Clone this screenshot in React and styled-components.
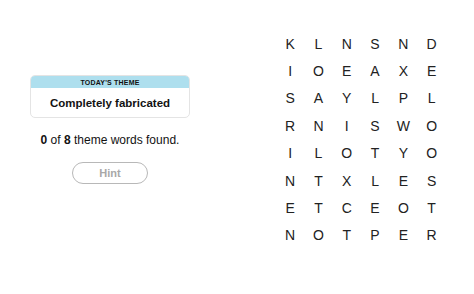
import React from "react";
import styled, { createGlobalStyle } from "styled-components";

const GlobalStyle = createGlobalStyle`
  html, body {
    margin: 0;
    padding: 0;
    background: #fff;
    font-family: "Liberation Sans", Arial, sans-serif;
    color: #121212;
  }
`;

const Page = styled.div`
  display: flex;
  width: 474px;
  height: 294px;
`;

const Side = styled.div`
  width: 220px;
  display: flex;
  flex-direction: column;
  align-items: center;
  padding-top: 75px;
`;

const ThemeCard = styled.div`
  width: 160px;
  border: 1px solid #e4e4e4;
  border-radius: 5px;
  overflow: hidden;
  box-sizing: border-box;
`;

const ThemeHeader = styled.div`
  background: #aedfee;
  height: 12px;
  display: flex;
  align-items: center;
  justify-content: center;
  font-size: 7px;
  font-weight: 700;
  letter-spacing: 0.2px;
  text-transform: uppercase;
`;

const ThemeTitle = styled.div`
  height: 29px;
  display: flex;
  align-items: center;
  justify-content: center;
  font-size: 11.5px;
  font-weight: 700;
`;

const Progress = styled.p`
  margin: 14px 0 0;
  font-size: 12px;
  line-height: 16px;

  b {
    font-weight: 700;
  }
`;

const HintButton = styled.button`
  margin-top: 14px;
  width: 76px;
  height: 22px;
  border: 1.5px solid #b8b8b8;
  border-radius: 12px;
  background: #fff;
  color: #a8a8a8;
  font-family: inherit;
  font-size: 11px;
  font-weight: 700;
  padding: 0;
`;

const Board = styled.div`
  margin: 30px 0 0 56px;
  display: grid;
  grid-template-columns: repeat(6, 28.3px);
  grid-auto-rows: 27.4px;
`;

const Letter = styled.div`
  display: flex;
  align-items: center;
  justify-content: center;
  font-size: 14px;
  color: #222;
  text-transform: uppercase;
`;

const rows = [
  "KLNSND",
  "IOEAXE",
  "SAYLPL",
  "RNISWO",
  "ILOTYO",
  "NTXLES",
  "ETCEOT",
  "NOTPER",
];

export default function App() {
  return (
    <Page>
      <GlobalStyle />
      <Side>
        <ThemeCard>
          <ThemeHeader>Today's theme</ThemeHeader>
          <ThemeTitle>Completely fabricated</ThemeTitle>
        </ThemeCard>
        <Progress>
          <b>0</b> of <b>8</b> theme words found.
        </Progress>
        <HintButton>Hint</HintButton>
      </Side>
      <Board>
        {rows.map((row, r) =>
          row.split("").map((ch, c) => <Letter key={`${r}-${c}`}>{ch}</Letter>)
        )}
      </Board>
    </Page>
  );
}
